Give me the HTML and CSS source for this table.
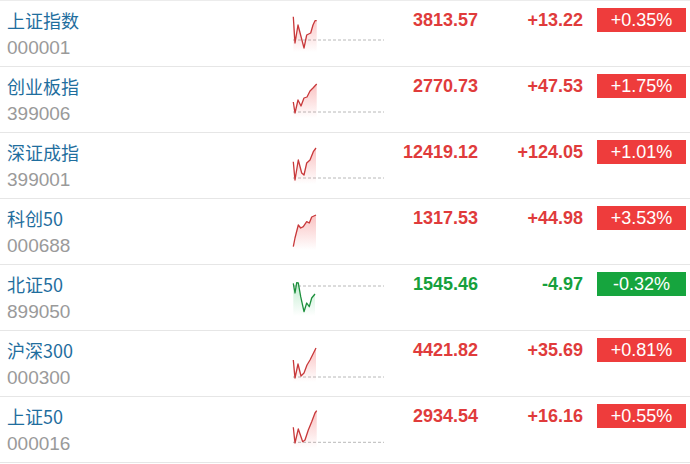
FILE: index.html
```html
<!DOCTYPE html>
<html lang="zh">
<head>
<meta charset="utf-8">
<link rel="stylesheet" href="styles.css">
</head>
<body>
<svg class="defs" width="0" height="0">
  <defs>
    <linearGradient id="gr" x1="0" y1="0" x2="0" y2="1">
      <stop offset="0" stop-color="#f05050" stop-opacity="0.35"/>
      <stop offset="1" stop-color="#f05050" stop-opacity="0"/>
    </linearGradient>
    <linearGradient id="gg" x1="0" y1="0" x2="0" y2="1">
      <stop offset="0" stop-color="#30c060" stop-opacity="0.3"/>
      <stop offset="1" stop-color="#30c060" stop-opacity="0"/>
    </linearGradient>
  </defs>
</svg>
<div class="list">
  <div class="row">
    <div class="name"><div class="title">上证指数</div><div class="code">000001</div></div>
    <svg class="chart" width="92" height="40" viewBox="0 0 92 40">
      <line class="base" x1="1" y1="28" x2="92" y2="28"/>
      <polygon class="fill-up" points="1.3,4.7 3,31 6,13 12,36 14.7,23 18.7,21 21,13 23,8.7 24.7,8.7 24.7,40 1.3,40"/>
      <polyline class="line-up" points="1.3,4.7 3,31 6,13 12,36 14.7,23 18.7,21 21,13 23,8.7 24.7,8.7"/>
    </svg>
    <div class="price up">3813.57</div>
    <div class="chg up">+13.22</div>
    <div class="badge bg-up">+0.35%</div>
  </div>
  <div class="row">
    <div class="name"><div class="title">创业板指</div><div class="code">399006</div></div>
    <svg class="chart" width="92" height="40" viewBox="0 0 92 40">
      <line class="base" x1="1" y1="34" x2="92" y2="34"/>
      <polygon class="fill-up" points="1.3,24 3,35 6,22 9,28 12,20 15,19 18,13 21,10 24.7,6 24.7,40 1.3,40"/>
      <polyline class="line-up" points="1.3,24 3,35 6,22 9,28 12,20 15,19 18,13 21,10 24.7,6"/>
    </svg>
    <div class="price up">2770.73</div>
    <div class="chg up">+47.53</div>
    <div class="badge bg-up">+1.75%</div>
  </div>
  <div class="row">
    <div class="name"><div class="title">深证成指</div><div class="code">399001</div></div>
    <svg class="chart" width="92" height="40" viewBox="0 0 92 40">
      <line class="base" x1="1" y1="34" x2="92" y2="34"/>
      <polygon class="fill-up" points="1.3,17.7 3,36 6.3,16 9.7,29 12,31 14.7,19 18,16 21.3,7.7 24,4 24,40 1.3,40"/>
      <polyline class="line-up" points="1.3,17.7 3,36 6.3,16 9.7,29 12,31 14.7,19 18,16 21.3,7.7 24,4"/>
    </svg>
    <div class="price up">12419.12</div>
    <div class="chg up">+124.05</div>
    <div class="badge bg-up">+1.01%</div>
  </div>
  <div class="row">
    <div class="name"><div class="title">科创50</div><div class="code">000688</div></div>
    <svg class="chart" width="92" height="40" viewBox="0 0 92 40">
      <polygon class="fill-up" points="1.3,36.7 3,28 6.3,15 8.7,18 11.3,16.7 14.7,11.7 17.3,13 19.7,7 24,5 24,40 1.3,40"/>
      <polyline class="line-up" points="1.3,36.7 3,28 6.3,15 8.7,18 11.3,16.7 14.7,11.7 17.3,13 19.7,7 24,5"/>
    </svg>
    <div class="price up">1317.53</div>
    <div class="chg up">+44.98</div>
    <div class="badge bg-up">+3.53%</div>
  </div>
  <div class="row">
    <div class="name"><div class="title">北证50</div><div class="code">899050</div></div>
    <svg class="chart" width="92" height="40" viewBox="0 0 92 40">
      <line class="base" x1="1" y1="10" x2="92" y2="10"/>
      <polygon class="fill-down" points="1.3,7.3 3,17 4.7,6.7 6.3,7 8.7,20.7 12,35.7 14.7,27 17.3,30.7 19.7,22 23,18 23,40 1.3,40"/>
      <polyline class="line-down" points="1.3,7.3 3,17 4.7,6.7 6.3,7 8.7,20.7 12,35.7 14.7,27 17.3,30.7 19.7,22 23,18"/>
    </svg>
    <div class="price down">1545.46</div>
    <div class="chg down">-4.97</div>
    <div class="badge bg-down">-0.32%</div>
  </div>
  <div class="row">
    <div class="name"><div class="title">沪深300</div><div class="code">000300</div></div>
    <svg class="chart" width="92" height="40" viewBox="0 0 92 40">
      <line class="base" x1="1" y1="35" x2="92" y2="35"/>
      <polygon class="fill-up" points="1.3,18 3,36 6,22 9,34 12,31 15,23 18,18 21,12 24,6 24,40 1.3,40"/>
      <polyline class="line-up" points="1.3,18 3,36 6,22 9,34 12,31 15,23 18,18 21,12 24,6"/>
    </svg>
    <div class="price up">4421.82</div>
    <div class="chg up">+35.69</div>
    <div class="badge bg-up">+0.81%</div>
  </div>
  <div class="row">
    <div class="name"><div class="title">上证50</div><div class="code">000016</div></div>
    <svg class="chart" width="92" height="40" viewBox="0 0 92 40">
      <line class="base" x1="1" y1="34.3" x2="92" y2="34.3"/>
      <polygon class="fill-up" points="1.3,19.3 3,35 6.3,21 10.7,33.7 13,32 16.3,22 19.7,13.7 23,5 24.7,2.7 24.7,40 1.3,40"/>
      <polyline class="line-up" points="1.3,19.3 3,35 6.3,21 10.7,33.7 13,32 16.3,22 19.7,13.7 23,5 24.7,2.7"/>
    </svg>
    <div class="price up">2934.54</div>
    <div class="chg up">+16.16</div>
    <div class="badge bg-up">+0.55%</div>
  </div>
</div>
</body>
</html>
```
FILE: styles.css
```css
html, body {
  margin: 0;
  padding: 0;
  background: #fff;
}
.defs {
  position: absolute;
  width: 0;
  height: 0;
}
.list {
  border-top: 1px solid #ececec;
  width: 690px;
}
.row {
  display: grid;
  grid-template-columns: 285px 92px 94px 105px 89px;
  column-gap: 0;
  align-items: start;
  box-sizing: border-box;
  height: 66px;
  padding: 7px 0 0 7px;
  border-bottom: 1px solid #e6e6e6;
}
.name {
  display: flex;
  flex-direction: column;
}
.title {
  font-family: "Noto Sans CJK SC", "Liberation Sans", sans-serif;
  font-size: 18px;
  line-height: 24px;
  color: #1f6e9e;
}
.code {
  font-family: "Liberation Sans", Arial, sans-serif;
  font-size: 19px;
  line-height: 24px;
  margin-top: 4px;
  color: #9a9a9a;
}
.chart {
  display: block;
  margin-top: 4px;
}
.base {
  stroke: #b8b8b8;
  stroke-width: 1;
  stroke-dasharray: 3 2;
}
.line-up {
  fill: none;
  stroke: #c8383a;
  stroke-width: 1.3;
  stroke-linejoin: round;
}
.line-down {
  fill: none;
  stroke: #1c8f3c;
  stroke-width: 1.3;
  stroke-linejoin: round;
}
.fill-up { fill: url(#gr); }
.fill-down { fill: url(#gg); }
.price, .chg {
  font-family: "Liberation Sans", Arial, sans-serif;
  font-weight: bold;
  font-size: 18px;
  line-height: 24px;
  text-align: right;
}
.chg {
  margin-right: 0;
}
.up { color: #e03b3b; }
.down { color: #16a03c; }
.badge {
  grid-column: 5;
  margin-left: 14px;
  width: 89px;
  height: 24px;
  box-sizing: border-box;
  font-family: "Liberation Sans", Arial, sans-serif;
  font-size: 18px;
  line-height: 24px;
  text-align: center;
  color: #fff;
}
.bg-up { background: #ee3c3c; }
.bg-down { background: #16a53e; }
```
